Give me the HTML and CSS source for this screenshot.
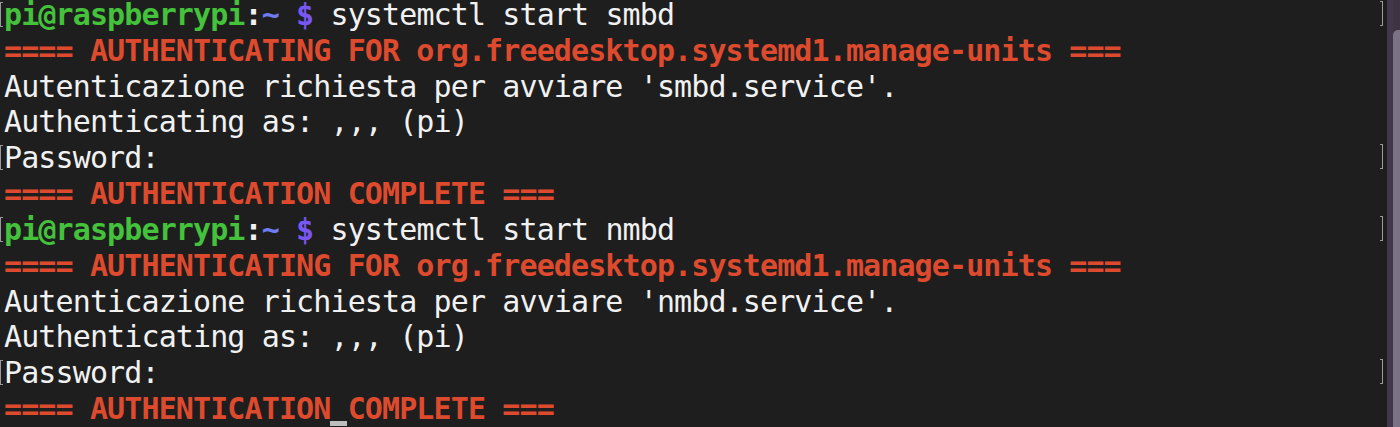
FILE: index.html
```html
<!DOCTYPE html>
<html>
<head>
<meta charset="utf-8">
<link rel="stylesheet" href="styles.css">
</head>
<body>
<div class="window">
  <div class="term">
    <div class="lines">
      <div class="line mark"><span class="user">pi@raspberrypi</span><span class="colon">:</span><span class="tilde">~</span> <span class="dollar">$</span> systemctl start smbd</div>
      <div class="line auth">==== AUTHENTICATING FOR org.freedesktop.systemd1.manage-units ===</div>
      <div class="line">Autenticazione richiesta per avviare 'smbd.service'.</div>
      <div class="line">Authenticating as: ,,, (pi)</div>
      <div class="line mark">Password:</div>
      <div class="line auth">==== AUTHENTICATION COMPLETE ===</div>
      <div class="line mark"><span class="user">pi@raspberrypi</span><span class="colon">:</span><span class="tilde">~</span> <span class="dollar">$</span> systemctl start nmbd</div>
      <div class="line auth">==== AUTHENTICATING FOR org.freedesktop.systemd1.manage-units ===</div>
      <div class="line">Autenticazione richiesta per avviare 'nmbd.service'.</div>
      <div class="line">Authenticating as: ,,, (pi)</div>
      <div class="line mark">Password:</div>
      <div class="line auth">==== AUTHENTICATION<span class="cursor-host"> <span class="cursor"></span></span>COMPLETE ===</div>
    </div>
  </div>
  <div class="edge">
    <div class="edge-dark"></div>
    <div class="edge-light"></div>
  </div>
</div>
</body>
</html>
```

FILE: styles.css
```css
html, body {
  margin: 0;
  padding: 0;
  width: 1400px;
  height: 427px;
  overflow: hidden;
  background: #1e1e1e;
}

.window {
  display: flex;
  width: 1400px;
  height: 427px;
}

.term {
  flex: 1;
  background: #1e1e1e;
  overflow: hidden;
  padding-left: 4px;
}

.lines {
  margin-top: -3px;
  font-family: "DejaVu Sans Mono", "Liberation Mono", monospace;
  font-size: 30px;
  letter-spacing: -0.88px;
  line-height: 35.82px;
  color: #f1f1f1;
}

.line {
  position: relative;
  height: 35.82px;
  white-space: pre;
}

.line.mark::before {
  content: "";
  position: absolute;
  left: -4px;
  top: 5px;
  width: 2px;
  height: 23px;
  border: 1px solid #9a9a9a;
  border-right: none;
}

.line.mark::after {
  content: "";
  position: absolute;
  left: 1376px;
  top: 4px;
  width: 2px;
  height: 23px;
  border: 1px solid #9a9a9a;
  border-left: none;
}

.user {
  color: #45c23b;
  font-weight: bold;
}

.colon {
  color: #f1f1f1;
  font-weight: bold;
}

.tilde {
  color: #6f7cf0;
  font-weight: bold;
}

.dollar {
  color: #7857f2;
  font-weight: bold;
}

.auth {
  color: #de4a2d;
  font-weight: bold;
}

.cursor-host {
  position: relative;
}

.cursor {
  position: absolute;
  left: 0;
  top: 30px;
  width: 17px;
  height: 5px;
  background: #bdbdbd;
}

.edge {
  width: 13px;
  display: flex;
  background: #3d3343;
}

.edge-dark {
  width: 6px;
  background: #41374a;
}

.edge-light {
  flex: 1;
  margin-top: 30px;
  background: #7b7383;
  border-top-left-radius: 5px;
}
```
